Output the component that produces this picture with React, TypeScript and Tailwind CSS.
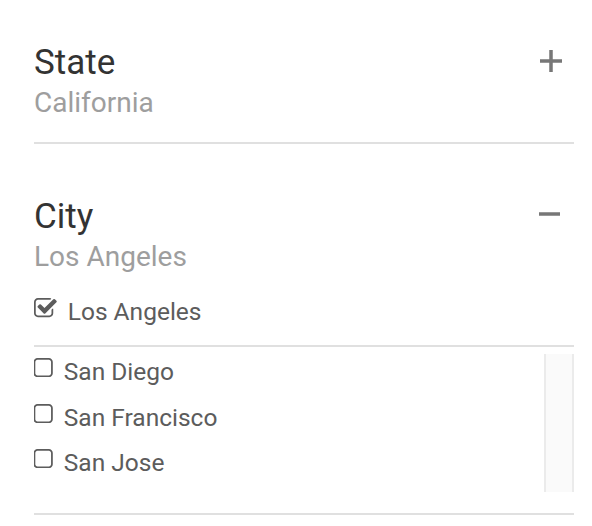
import React from 'react';

const CITIES = [
  { name: 'San Diego', checked: false },
  { name: 'San Francisco', checked: false },
  { name: 'San Jose', checked: false },
];

// FA4 style glyphs, cropped to the ink box
function CheckSquareIcon() {
  return (
    <svg width="22.74" height="19.25" viewBox="64 128 1663 1408" className="mt-[9px] shrink-0 overflow-visible" fill="#5c5c5c">
      <path d="M1472 930v318q0 119-84.5 203.5t-203.5 84.5h-832q-119 0-203.5-84.5t-84.5-203.5v-832q0-119 84.5-203.5t203.5-84.5h832q63 0 117 25 15 7 18 23 3 17-9 29l-49 49q-10 10-23 10-3 0-9-2-23-6-45-6h-832q-66 0-113 47t-47 113v832q0 66 47 113t113 47h832q66 0 113-47t47-113v-254q0-13 9-22l64-64q10-10 23-10 6 0 12 3 20 8 20 29zm231-489l-814 814q-24 24-57 24t-57-24l-430-430q-24-24-24-57t24-57l110-110q24-24 57-24t57 24l263 263 647-647q24-24 57-24t57 24l110 110q24 24 24 57t-24 57z" />
    </svg>
  );
}

function SquareIcon() {
  return (
    <svg width="18.81" height="19.25" viewBox="0 128 1376 1408" className="mt-[9px] shrink-0" fill="#5c5c5c">
      <path d="M1088 256h-832q-66 0-113 47t-47 113v832q0 66 47 113t113 47h832q66 0 113-47t47-113v-832q0-66-47-113t-113-47zm288 160v832q0 119-84.5 203.5t-203.5 84.5h-832q-119 0-203.5-84.5t-84.5-203.5v-832q0-119 84.5-203.5t203.5-84.5h832q119 0 203.5 84.5t84.5 203.5z" />
    </svg>
  );
}

function PlusIcon() {
  return (
    <svg width="22" height="22" viewBox="0 0 22 22" className="mt-[8px] mr-[12px] shrink-0" fill="#777">
      <rect x="0" y="9.25" width="22" height="3.5" />
      <rect x="9.25" y="0" width="3.5" height="22" />
    </svg>
  );
}

function MinusIcon() {
  return (
    <svg width="22" height="22" viewBox="0 0 22 22" className="mt-[7px] mr-[13px] shrink-0" fill="#777">
      <rect x="0" y="9.25" width="21" height="3.5" />
    </svg>
  );
}

function Header({ title, value, open }: { title: string; value: string; open: boolean }) {
  return (
    <div className="flex items-start justify-between">
      <div>
        <div className="text-[35px] leading-[42px] text-[#333]">{title}</div>
        <div className="text-[28px] leading-[38px] text-[#9e9e9e]">{value}</div>
      </div>
      {open ? <MinusIcon /> : <PlusIcon />}
    </div>
  );
}

export default function App() {
  return (
    <div className="w-[592px] h-[526px] bg-white pl-[34px] pr-[18px] font-['Roboto','Noto_Sans',sans-serif]">
      {/* ── State (collapsed) ── */}
      <div className="pt-[42px] pb-[20px] border-b-2 border-[#e0e0e0]">
        <Header title="State" value="California" open={false} />
      </div>

      {/* ── City (expanded) ── */}
      <div className="pt-[52px] pb-[10.5px] border-b-2 border-[#e0e0e0]">
        <Header title="City" value="Los Angeles" open />
        <div className="mt-[13px] flex items-start gap-[11px] text-[24.5px] leading-[45.5px] text-[#5c5c5c]">
          <CheckSquareIcon />
          <span>Los Angeles</span>
        </div>
      </div>

      <div className="h-[168px] flex items-start justify-between border-b-2 border-[#e0e0e0]">
        <div className="pt-[2px]">
          {CITIES.map(c => (
            <div key={c.name} className="flex items-start gap-[11px] text-[24.5px] leading-[45.5px] text-[#5c5c5c]">
              {c.checked ? <CheckSquareIcon /> : <SquareIcon />}
              <span>{c.name}</span>
            </div>
          ))}
        </div>
        <div className="mt-[7px] h-[138px] w-[30px] bg-[#fafafa] border-x-2 border-[#ebebeb]" />
      </div>
    </div>
  );
}
